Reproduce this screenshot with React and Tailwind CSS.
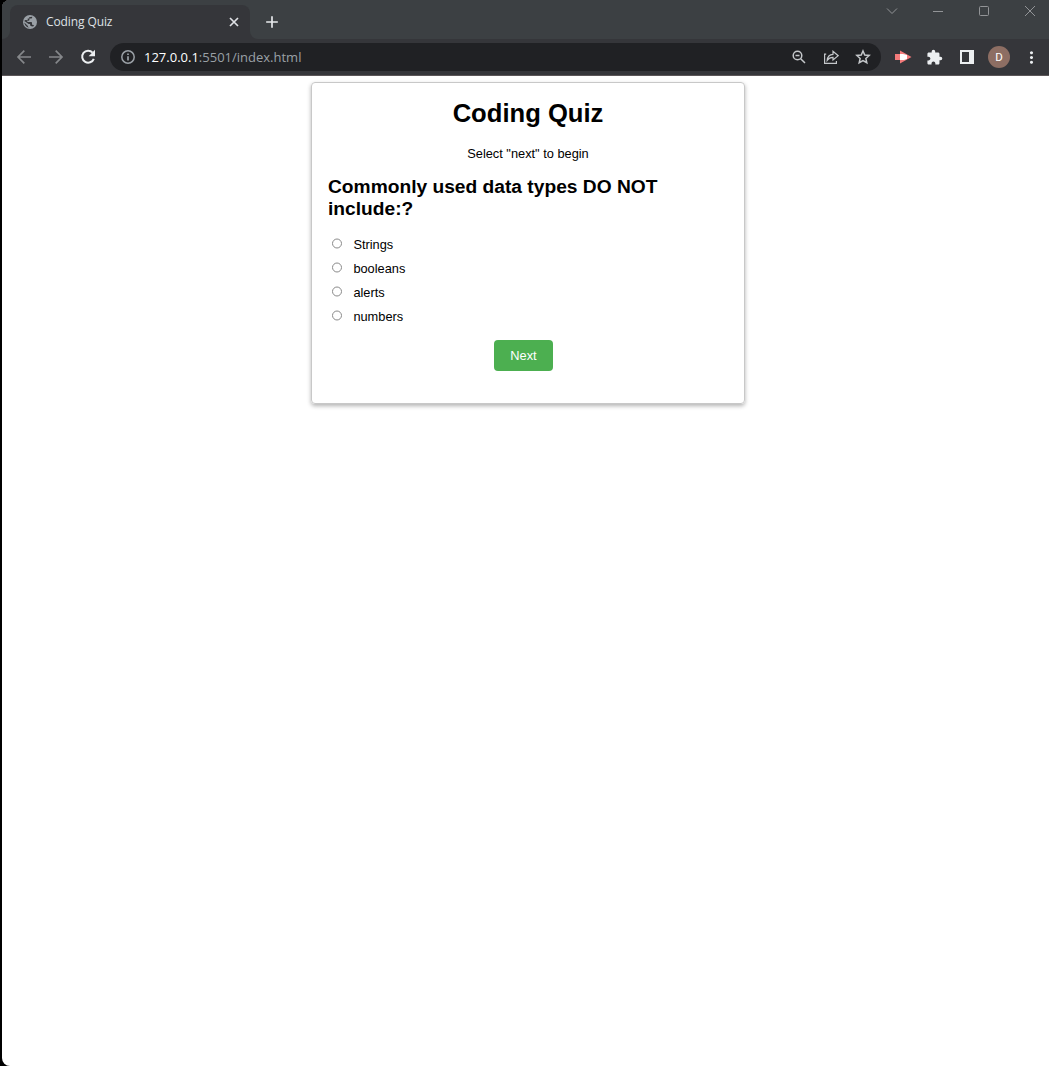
import { MdAdd, MdExtension, MdMoreVert } from "react-icons/md";

const options = ["Strings", "booleans", "alerts", "numbers"];

function Globe() {
  return (
    <svg width="14" height="14" viewBox="0 0 14 14" className="shrink-0">
      <circle cx="7" cy="7" r="7" fill="#9aa0a6" />
      <path d="M9.2 1.7v.5c0 .8-.6 1.4-1.4 1.4H6.4v1.3c0 .4-.3.8-.8.8H4.3v1.3h3.9c.5 0 .8.4.8.8v2h.7c.6 0 1.1.4 1.3.9l-1 .9-1.5-.4c-.8 0-1.4-.6-1.4-1.4v-.7H5.6L1.7 6.2l-.3 1.3 3.5 3.4c0 .7.6 1.3 1.4 1.3v.4l-1.7-.4A5.6 5.6 0 0 1 1.4 7l.4-2 2.9.3V3.6h1.4V2.3Z" fill="#35363a" />
    </svg>
  );
}

function Arrow({ className }) {
  return (
    <svg width="16" height="16" viewBox="0 0 16 16" className={className} fill="none" stroke="#85878a" strokeWidth="1.7">
      <path d="M15 8H2.2M8.3 1.6 2 8l6.3 6.4" />
    </svg>
  );
}

function TabStrip() {
  return (
    <div className="flex h-[39px] bg-[#3c4043]">
      <div className="w-2 bg-[#35363a]"><div className="h-full w-2 rounded-br-lg bg-[#3c4043]" /></div>
      <div className="mt-[5px] flex w-[240px] items-center rounded-t-lg bg-[#35363a] pl-[13px] pr-[11px]">
        <Globe />
        <span className="ml-[9px] flex-1 whitespace-nowrap text-[12px] tracking-[-0.1px] text-[#dfe1e5]">Coding Quiz</span>
        <svg width="10" height="10" viewBox="0 0 10 10" stroke="#dfe1e5" strokeWidth="1.7"><path d="m1 1 8 8M9 1 1 9" /></svg>
      </div>
      <div className="w-2 bg-[#35363a]"><div className="h-full w-2 rounded-bl-lg bg-[#3c4043]" /></div>
      <MdAdd className="ml-1 mt-[12px] size-5 text-[#e8eaed]" />
      <div className="ml-auto mr-[13px] mt-[5px] flex gap-[34px]">
        <svg width="12" height="12" viewBox="0 0 12 12" fill="none" stroke="#929497"><path d="M1 3.5 6 8.5 11 3.5" /></svg>
        <svg width="12" height="12" viewBox="0 0 12 12" fill="none" stroke="#929497"><path d="M1 6.5h10" /></svg>
        <svg width="12" height="12" viewBox="0 0 12 12" fill="none" stroke="#929497"><rect x="1.5" y="1.5" width="9" height="9" rx="1" /></svg>
        <svg width="12" height="12" viewBox="0 0 12 12" fill="none" stroke="#929497"><path d="m1 1 10 10M11 1 1 11" /></svg>
      </div>
    </div>
  );
}

function Toolbar() {
  return (
    <div className="flex h-[37px] items-center border-b border-[#5b5658] bg-[#35363a] pl-[14px] text-[#eceff1]">
      <Arrow />
      <Arrow className="ml-4 rotate-180" />
      <svg width="16" height="16" viewBox="0 0 16 16" className="ml-[16px]"><path d="M12.6 3.6A6 6 0 1 0 13.8 9.8" fill="none" stroke="currentColor" strokeWidth="2" /><path d="M15 .8v6.4H8.6Z" fill="currentColor" /></svg>
      <div className="ml-[14px] flex h-7 w-[771px] items-center rounded-full bg-[#202124] pl-[11px] pr-[9px] text-[#c4c7ca]">
        <svg width="14" height="14" viewBox="0 0 14 14" fill="none" stroke="#9aa0a6" strokeWidth="1.5"><circle cx="7" cy="7" r="6.2" /><path d="M7 6.2v4.3M7 3.4V5" strokeWidth="1.7" /></svg>
        <span className="ml-[9px] flex-1 whitespace-nowrap pt-[2px] text-[13px] text-[#9aa0a6]"><span className="text-white">127.0.0.1</span>:5501/index.html</span>
        <svg width="16" height="16" viewBox="0 0 16 16" fill="none" stroke="currentColor" strokeWidth="1.5"><circle cx="6.5" cy="6.5" r="4.3" /><path d="m9.7 9.7 4.3 4.3M4.5 6.5h4" /></svg>
        <svg width="16" height="16" viewBox="0 0 16 16" className="ml-4" fill="none" stroke="currentColor" strokeWidth="1.2"><path d="M3.2 5.2H1.6v9.2h11.8V12M4.2 11.3c.3-3.8 2.3-5.8 5.8-6V2.2L15.2 6.7 10 11V8.4c-2.5 0-4.3.7-5.8 2.9Z" /></svg>
        <svg width="18" height="18" viewBox="0 0 18 18" className="ml-[15px]" fill="none" stroke="currentColor" strokeWidth="1.5"><path d="m9 3 1.75 4.05 4.4.4-3.3 2.95.95 4.35L9 12.5l-3.8 2.25.95-4.35-3.3-2.95 4.4-.4Z" /></svg>
      </div>
      <svg width="17" height="14" viewBox="0 0 17 14" className="ml-[14px]"><path d="M0 4h5V0.5L16.5 7 5 13.5V10H0Z" fill="#f47b7b" /><path d="M5 4h3l4 1v4l-3 1H5Z" fill="#fff" /></svg>
      <MdExtension className="ml-[14px] mr-px size-[17px]" />
      <svg width="14" height="14" viewBox="0 0 14 14" className="ml-[16px]"><path d="M0 0h14v14H0ZM2 2v10h7V2Z" fill="currentColor" fillRule="evenodd" /></svg>
      <div className="ml-[14px] flex size-[22px] items-center justify-center rounded-full bg-[#8d6e63] pt-px font-['Roboto'] text-[11.5px] text-white">D</div>
      <MdMoreVert className="ml-[12px] size-[19px]" />
    </div>
  );
}

export default function App() {
  return (
    <div className="h-[1066px] w-[1049px] overflow-hidden bg-black pl-[2px] font-['Open_Sans',sans-serif]">
      <div className="h-full overflow-hidden rounded-l-lg bg-white">
        <TabStrip />
        <Toolbar />
        <main className="ml-[309px] mt-[6px] flex h-[322px] w-[434px] flex-col rounded-[4px] border border-[#c8c8c8] px-4 font-['Liberation_Sans',sans-serif] text-[12.8px] text-black shadow-[0_2px_4px_rgba(0,0,0,0.3)]">
          <h1 className="mt-[15px] text-center text-[25.6px] font-bold leading-[30px]">Coding Quiz</h1>
          <p className="mt-[18px] text-center leading-[15px]">Select "next" to begin</p>
          <h2 className="mt-[15px] text-[19.2px] font-bold leading-[22px]">Commonly used data types DO NOT include:?</h2>
          <div className="mt-[12px]">
            {options.map((o) => (
              <label key={o} className="flex h-6 items-center">
                <input type="radio" name="answer" className="mb-[1px] ml-[4px] mr-[11px] size-[10.4px] opacity-85" />
                <span className="pt-[2px]">{o}</span>
              </label>
            ))}
          </div>
          <button className="ml-[166px] mt-[12px] h-[31px] w-[59px] rounded-[4px] bg-[#4caf50] text-white">Next</button>
        </main>
      </div>
    </div>
  );
}
